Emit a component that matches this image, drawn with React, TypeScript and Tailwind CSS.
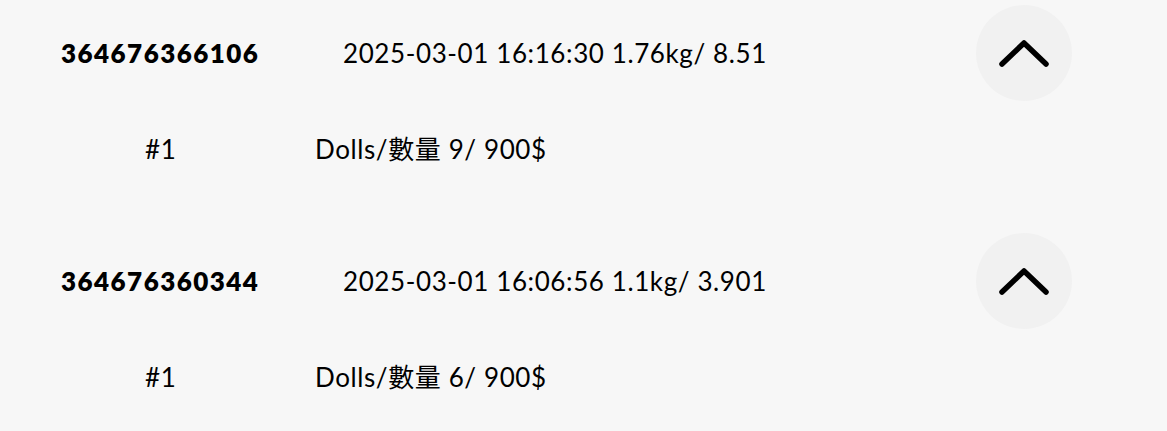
const orders = [
  {
    id: "364676366106",
    meta: "2025-03-01 16:16:30 1.76kg/ 8.51",
    items: [{ no: "#1", text: "Dolls/數量 9/ 900$" }],
  },
  {
    id: "364676360344",
    meta: "2025-03-01 16:06:56 1.1kg/ 3.901",
    items: [{ no: "#1", text: "Dolls/數量 6/ 900$" }],
  },
];

function ChevronUp() {
  return (
    <svg width="52" height="32" viewBox="0 0 52 32" fill="none">
      <path d="M4 27 L26 6 L48 27" stroke="#000" strokeWidth="5.5" strokeLinecap="round" strokeLinejoin="round" />
    </svg>
  );
}

export default function App() {
  return (
    <div
      className="w-[1167px] h-[431px] overflow-hidden bg-[#f7f7f7] text-black"
      style={{ fontFamily: "Lato, 'Noto Sans CJK TC', sans-serif" }}
    >
      {orders.map((o) => (
        <div key={o.id} className="pt-[5px] pb-[55px]">
          {/* header row */}
          <div className="flex items-center h-[96px]">
            <div className="w-[343px] pl-[61px] text-[26px] font-extrabold tracking-[1.45px]">{o.id}</div>
            <div className="flex-1 text-[26px] tracking-[0.6px]">{o.meta}</div>
            <button className="w-[96px] h-[96px] mr-[95px] rounded-full bg-[#f1f1f1] flex items-center justify-center">
              <ChevronUp />
            </button>
          </div>
          {/* items */}
          {o.items.map((it) => (
            <div key={it.no} className="flex items-center h-[48px] mt-[24px] text-[26px] tracking-[0.6px]">
              <div className="w-[315px] pl-[145px]">{it.no}</div>
              <div>{it.text}</div>
            </div>
          ))}
        </div>
      ))}
    </div>
  );
}
